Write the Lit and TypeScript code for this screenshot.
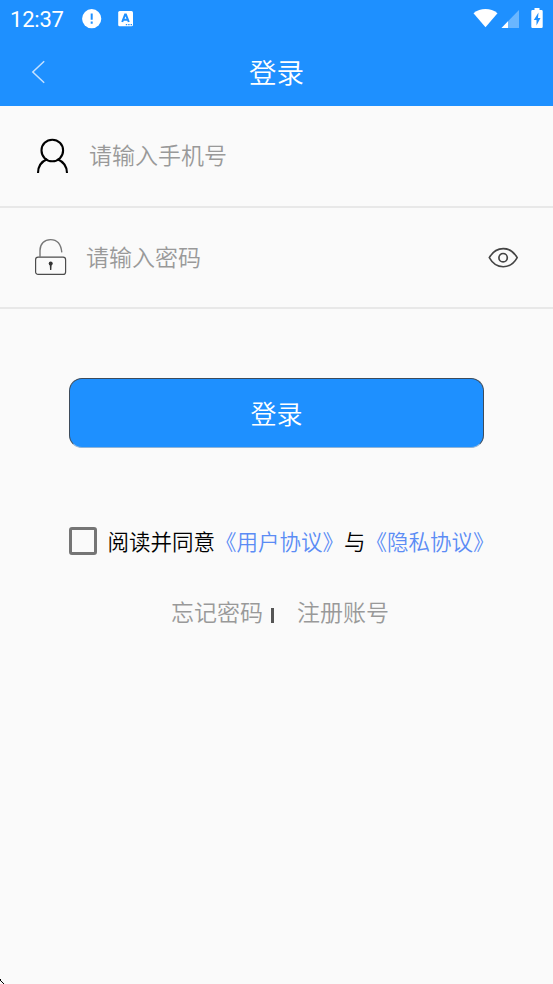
import { LitElement, html, css } from "lit";
import { customElement } from "lit/decorators.js";

@customElement("app-root")
export class AppRoot extends LitElement {
  static styles = css`
    :host {
      display: block;
      position: relative;
      height: 984px;
      overflow: hidden;
      background: #fafafa;
      font-family: "Noto Sans CJK SC", sans-serif;
      font-weight: 350;
    }
    * { box-sizing: border-box; }
    svg { display: block; flex: none; }
    .top { background: #1e90ff; height: 106px; color: #fff; }
    .status {
      display: flex;
      align-items: center;
      height: 38px;
      padding: 0 8px 0 10px;
    }
    .time {
      width: 72px;
      padding-top: 2px;
      font-family: Roboto, sans-serif;
      font-size: 22px;
      line-height: 36px;
      font-weight: 450;
      letter-spacing: -0.2px;
    }
    .gap { flex: 1; }
    .nav {
      display: grid;
      grid-template-columns: 60px 1fr 60px;
      align-items: center;
      height: 68px;
    }
    .back { margin-left: 30px; }
    .title { padding-bottom: 3px; text-align: center; font-size: 27.5px; line-height: 40px; }
    .field {
      display: flex;
      align-items: center;
      height: 102px;
      padding-left: 34px;
      border-bottom: 2px solid #e8e8e8;
      color: #999;
      font-size: 23px;
      line-height: 28px;
    }
    .password { height: 101px; }
    .phone-hint { margin-left: 19px; padding-bottom: 4px; }
    .password-hint { flex: 1; margin-left: 18px; padding-bottom: 4px; }
    .lock { margin-bottom: 1px; }
    .eye { margin-right: 34px; }
    .submit {
      display: block;
      width: 415px;
      height: 70px;
      margin: 69px 0 0 69px;
      padding: 0 0 1px;
      border: 1px solid #3d4b5a;
      border-bottom-color: #8fb4d8;
      border-radius: 13px;
      background: #1e90ff;
      color: #fff;
      font: inherit;
      font-size: 26px;
      line-height: 32px;
    }
    .agree {
      display: flex;
      align-items: center;
      height: 32px;
      margin: 77px 0 0 69px;
      color: #000;
      font-size: 21.5px;
      line-height: 26px;
      white-space: nowrap;
    }
    .terms { padding-bottom: 1px; }
    .box { width: 28px; height: 28px; margin-right: 10.5px; border: 3px solid #757575; border-radius: 3px; }
    .link { color: #5b8cf5; }
    .links {
      display: flex;
      align-items: center;
      height: 34px;
      margin: 37px 0 0 171px;
      color: #999;
      font-size: 23px;
      line-height: 28px;
    }
    .bar { width: 3px; height: 15px; margin: 8px 23px 0 8px; background: #555; }
    .corner { position: absolute; left: 0; bottom: 0; }
  `;

  render() {
    return html`
      <header class="top">
        <div class="status">
          <span class="time">12:37</span>
          <svg width="20" height="20" viewBox="0 0 20 20">
            <circle cx="9.7" cy="9.7" r="9.6" fill="#fff" />
            <path d="M9.7 4.5v6.3M9.7 12.6v2.2" stroke="#1e90ff" stroke-width="2" />
          </svg>
          <svg width="32" height="16" viewBox="0 0 32 16">
            <rect x="16.2" y="0" width="14.8" height="15.2" rx="1.5" fill="#fff" />
            <path d="M20.2 11 L23.1 3.6h.8l2.9 7.4M21.6 8.8h3.8" fill="none" stroke="#1e90ff" stroke-width="2" />
            <path d="M23.8 13.7h1.4M26.2 13.7h1.4M28.6 13.7h1.4" stroke="#1e90ff" stroke-width="1.2" />
          </svg>
          <span class="gap"></span>
          <svg width="72" height="22" viewBox="0 0 72 22">
            <path d="M0.5 5.3C7.5-.3 17.5-.3 24.5 5.3L12.5 19.3z" fill="#fff" />
            <path d="M46 2V20H28.5z" fill="#fff" fill-opacity=".34" />
            <path d="M35 13.3V20H28.5z" fill="#fff" />
            <path d="M61.5 0h5v2h2q1.2 0 1.2 1.2v15.6q0 1.2-1.2 1.2h-9q-1.2 0-1.2-1.2V3.2q0-1.2 1.2-1.2h2z" fill="#fff" />
            <path d="M65.5 4.5L60.8 12h2.7v5.5l4-7.5h-2.5z" fill="#1e90ff" />
          </svg>
        </div>
        <div class="nav">
          <svg class="back" width="18" height="24" viewBox="0 0 18 24">
            <path d="M14.2 1.2L2.8 12l11.4 10.8" fill="none" stroke="#c5e1ff" stroke-width="1.5" />
          </svg>
          <span class="title">登录</span>
        </div>
      </header>
      <div class="field">
        <svg width="36" height="36" viewBox="0 0 36 36">
          <circle cx="18.3" cy="12.5" r="10.8" fill="none" stroke="#000" stroke-width="2.1" />
          <path d="M4 35C4 28.5 7.5 23.5 13 21.2M23.6 21.2C29 23.5 33 28.5 33 35" fill="none" stroke="#000" stroke-width="2.1" />
        </svg>
        <span class="phone-hint">请输入手机号</span>
      </div>
      <div class="field password">
        <svg class="lock" width="34" height="38" viewBox="0 0 34 38">
          <rect x="1.6" y="19.2" width="30" height="17.2" rx="2.5" fill="none" stroke="#4c4c4c" stroke-width="1.2" />
          <path d="M6 19v-6.5C6 5.8 10.5 1.6 16.5 1.6c6 0 10.5 4.3 11.3 12.8" fill="none" stroke="#777" stroke-width="1.4" />
          <circle cx="16.7" cy="25.4" r="2" fill="#333" />
          <path d="M15.7 26h2l-.4 6h-1.2z" fill="#333" />
        </svg>
        <span class="password-hint">请输入密码</span>
        <svg class="eye" width="31" height="22" viewBox="0 0 31 22">
          <path d="M1.3 10.7C8-1.4 22.5-1.4 29.2 10.7C22.5 22.8 8 22.8 1.3 10.7z" fill="none" stroke="#444" stroke-width="1.6" />
          <circle cx="15.1" cy="10.7" r="4.2" fill="none" stroke="#444" stroke-width="1.7" />
        </svg>
      </div>
      <button class="submit">登录</button>
      <div class="agree">
        <span class="box"></span>
        <span class="terms">阅读并同意<span class="link">《用户协议》</span>与<span class="link">《隐私协议》</span></span>
      </div>
      <div class="links"><span>忘记密码</span><span class="bar"></span><span>注册账号</span></div>
      <svg class="corner" width="5" height="5" viewBox="0 0 5 5">
        <path d="M0 0h1v2H0zM1 2h1v1H1zM2 3h1v1H2zM3 4h1v1H3z" fill="#000" />
      </svg>
    `;
  }
}
